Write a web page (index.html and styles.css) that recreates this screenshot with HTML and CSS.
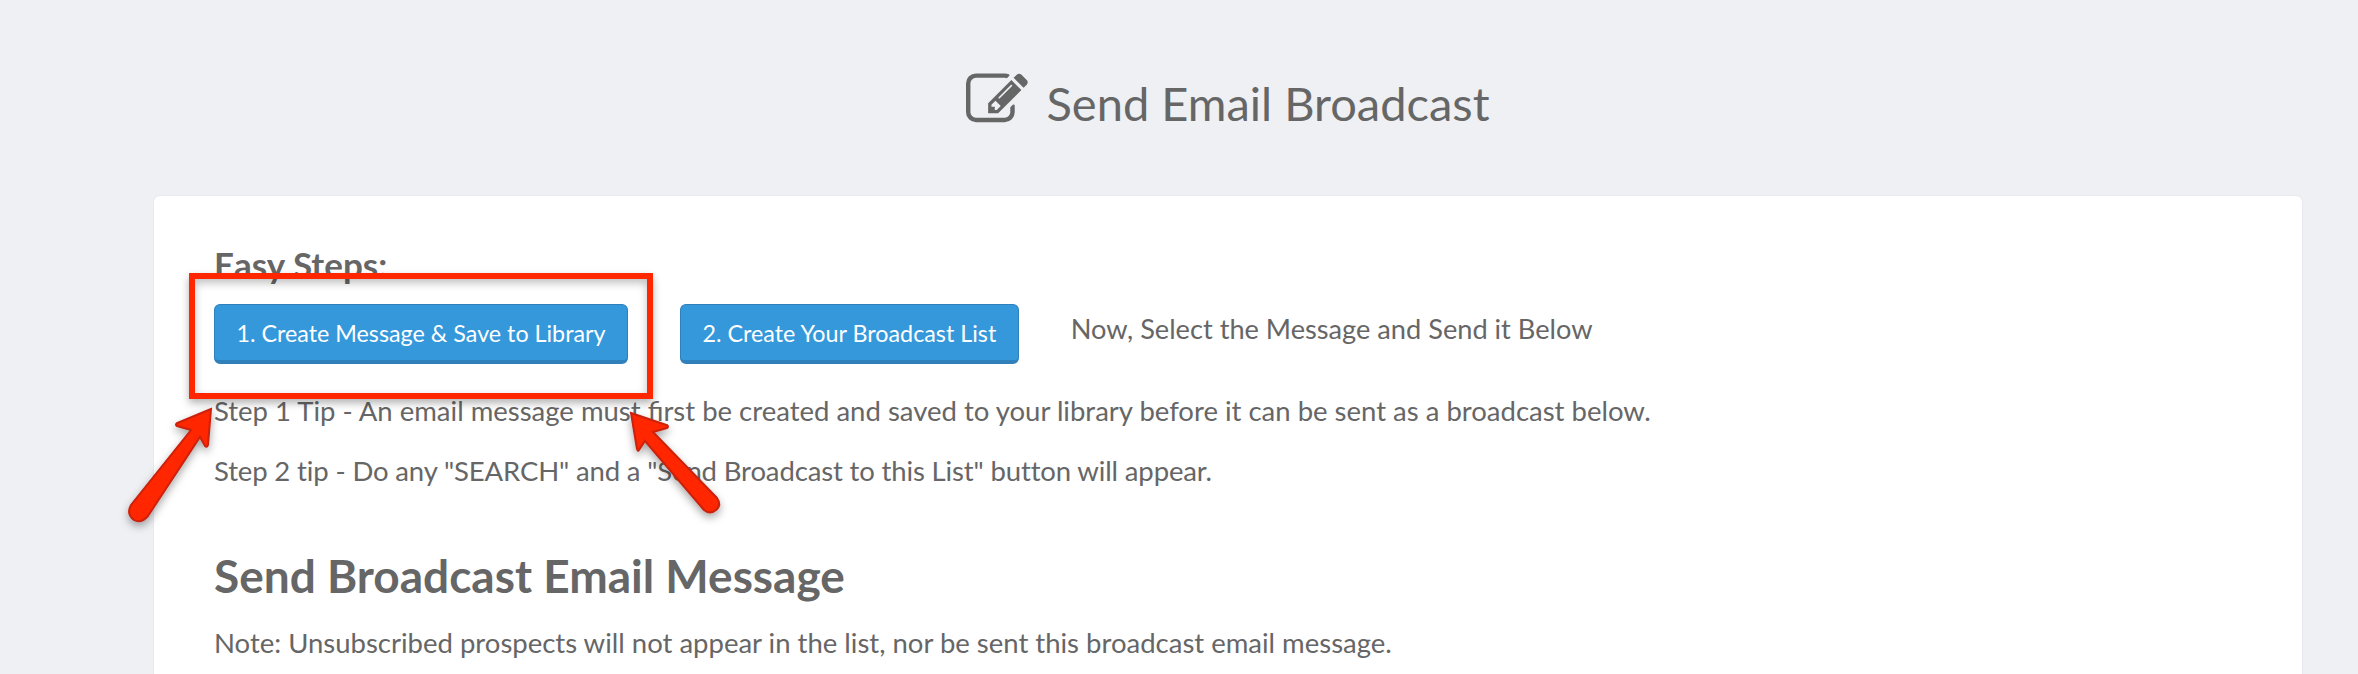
FILE: index.html
```html
<!DOCTYPE html>
<html lang="en">
<head>
    <meta charset="UTF-8">
    <title>Send Email Broadcast</title>
    <link rel="stylesheet" href="styles.css">
</head>
<body>
<h1 class="page-title">
    <svg class="title-icon" viewBox="0 0 1792 1792"><path d="M888 1184l116-116-152-152-116 116v56h96v96h56zm440-720q-16-16-33 1l-350 350q-17 17-1 33t33-1l350-350q17-17 1-33zm80 594v190q0 119-84.5 203.5t-203.5 84.5h-832q-119 0-203.5-84.5t-84.5-203.5v-832q0-119 84.5-203.5t203.5-84.5h832q63 0 117 25 15 7 18 23 3 17-9 29l-49 49q-14 14-32 8-23-6-45-6h-832q-66 0-113 47t-47 113v832q0 66 47 113t113 47h832q66 0 113-47t47-113v-126q0-13 9-22l64-64q15-15 35-7t20 29zm-96-738l288 288-672 672h-288v-288zm444 132l-92 92-288-288 92-92q28-28 68-28t68 28l152 152q28 28 28 68t-28 68z"/></svg>
    <span>Send Email Broadcast</span>
</h1>

<div class="card">
    <div class="easy-title">Easy Steps:</div>
    <div class="steps">
        <a class="btn">1. Create Message &amp; Save to Library</a>
        <a class="btn">2. Create Your Broadcast List</a>
        <span class="steps-note">Now, Select the Message and Send it Below</span>
    </div>
    <p class="tip">Step 1 Tip - An email message must first be created and saved to your library before it can be sent as a broadcast below.</p>
    <p class="tip">Step 2 tip - Do any "SEARCH" and a "Send Broadcast to this List" button will appear.</p>
    <h2>Send Broadcast Email Message</h2>
    <p class="note">Note: Unsubscribed prospects will not appear in the list, nor be sent this broadcast email message.</p>
</div>

<!-- annotations drawn over the page -->
<div class="red-box"></div>
<svg class="arrows" viewBox="0 0 2358 674">
    <defs>
        <filter id="arrowShadow" x="-30%" y="-30%" width="160%" height="160%">
            <feDropShadow dx="0" dy="4" stdDeviation="4" flood-color="#000" flood-opacity="0.35"/>
        </filter>
    </defs>
    <path class="arrow" d="M211 409 L177 423 Q175 425 177 426 L191 430 L131 505 Q126 514 134 520 Q141 524 148 516 L200 437 L205 446 Q207 448 208 445 Z"/>
    <path class="arrow" d="M631 413 L667 425 Q669 427 667 428 L653 432 L717 498 Q722 505 716 510 Q710 515 704 510 L645 441 L639 450 Q638 452 637 449 Z"/>
</svg>
</body>
</html>
```

FILE: styles.css
```css
* { box-sizing: border-box; }

body {
    margin: 0;
    height: 674px;
    overflow: hidden;
    background: #eef0f4;
    color: #666;
    font-family: "Lato", "Noto Sans", sans-serif;
}

.page-title {
    display: flex;
    justify-content: center;
    align-items: center;
    gap: 19px;
    height: 196px;
    margin: 0;
    padding: 10px 0 0 97px;
    font-size: 47px;
    font-weight: 400;
}

.title-icon {
    width: 62px;
    height: 62px;
    margin-top: -6px;
    fill: #666;
}

.card {
    margin: 0 56px 0 154px;
    height: 478px;
    padding: 50px 60px;
    overflow: hidden;
    background: #fff;
    border-radius: 6px 6px 0 0;
    box-shadow: 0 0 0 1px #e8e9ee;
}

.easy-title {
    font-size: 35px;
    font-weight: 700;
    line-height: 36px;
}

.steps {
    display: flex;
    align-items: flex-start;
    gap: 52px;
    margin-top: 22px;
}

.btn {
    height: 60px;
    padding: 0 21.5px;
    display: flex;
    align-items: center;
    background: #3498db;
    border: 1px solid #2f80bb;
    border-bottom-width: 4px;
    border-radius: 6px;
    color: #fff;
    font-size: 23.3px;
}

.steps-note {
    font-size: 27.2px;
    line-height: 50px;
}

.tip {
    margin: 30px 0 0;
    font-size: 27.5px;
    line-height: 34px;
}

.tip + .tip {
    margin-top: 26px;
    letter-spacing: -0.14px;
}

h2 {
    margin: 60px 0 0;
    font-size: 46px;
    font-weight: 700;
    line-height: 56px;
}

.note {
    margin: 22px 0 0;
    font-size: 27.5px;
    line-height: 34px;
}

.red-box {
    position: absolute;
    left: 189px;
    top: 273px;
    width: 464px;
    height: 126px;
    border: 6px solid #ff2600;
    box-shadow: 0 4px 8px rgba(0, 0, 0, 0.3), inset 0 4px 8px rgba(0, 0, 0, 0.25);
}

.arrows {
    position: absolute;
    left: 0;
    top: 0;
    width: 2358px;
    height: 674px;
}

.arrow {
    fill: #ff2600;
    stroke: #c9210a;
    stroke-width: 2;
    filter: url(#arrowShadow);
}
```
